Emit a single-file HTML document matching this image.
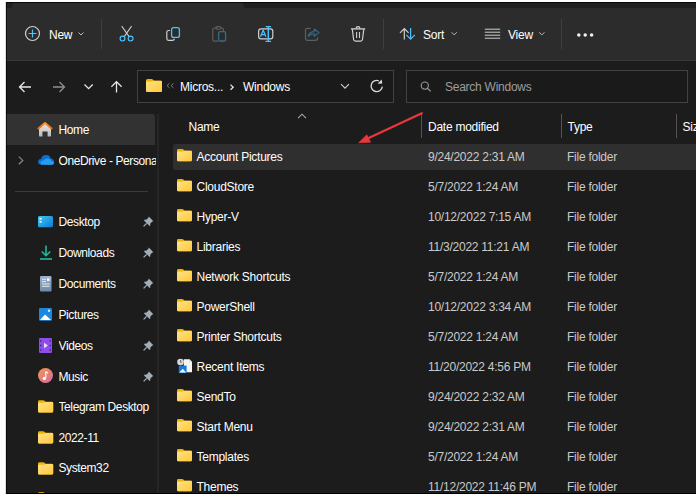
<!DOCTYPE html>
<html><head><meta charset="utf-8">
<style>
*{margin:0;padding:0;box-sizing:border-box}
html,body{width:696px;height:498px;overflow:hidden;background:#fff}
body{position:relative;font-family:"Liberation Sans",sans-serif;font-size:12px;letter-spacing:-0.25px;color:#fff}
.a{position:absolute}
.t{position:absolute;white-space:nowrap;line-height:14px;color:#fff;margin-top:1px}
svg{position:absolute;overflow:visible}
.sep{position:absolute;width:1px;background:#444}
</style></head><body>

<div class="a" style="left:6px;top:2px;width:690px;height:492px;background:#1c1c1c"></div>
<div class="a" style="left:6px;top:2px;width:690px;height:6px;background:#2c2c2c"></div>
<div class="a" style="left:6px;top:2px;width:7px;height:6px;background:#202020;border-bottom-right-radius:4px"></div>
<div class="a" style="left:243px;top:2px;width:460px;height:6px;background:#202020;border-bottom-left-radius:4px"></div>
<div class="a" style="left:6px;top:2px;width:690px;height:1px;background:#0a0a0a"></div>
<div class="a" style="left:6px;top:8px;width:690px;height:53px;background:#2c2c2c;border-bottom:1px solid #383838"></div>
<svg style="left:0;top:0" width="696" height="62">
  <circle cx="32.5" cy="33.5" r="7" fill="none" stroke="#cfcfcf" stroke-width="1.2"/>
  <path d="M32.5 29.5v8M28.5 33.5h8" stroke="#4cc2ff" stroke-width="1.2"/>
  <path d="M78.5 32.5l2.5 2.5 2.5-2.5" fill="none" stroke="#bdbdbd" stroke-width="1"/>
  <!-- scissors -->
  <path d="M122 26.5L129 36.5M131.3 26.5L124.3 36.5" stroke="#cfcfcf" stroke-width="1.2" stroke-linecap="round"/>
  <circle cx="122.5" cy="38.6" r="2.4" fill="none" stroke="#4cc2ff" stroke-width="1.15"/>
  <circle cx="130.6" cy="38.6" r="2.4" fill="none" stroke="#4cc2ff" stroke-width="1.15"/>
  <!-- copy -->
  <path d="M170 30.5H168.5Q166.8 30.5 166.8 32.2V38.5Q166.8 40.3 168.5 40.3H172.5Q174.2 40.3 174.4 38.6" fill="none" stroke="#cfcfcf" stroke-width="1.2"/>
  <rect x="171.6" y="27.6" width="7.8" height="9.8" rx="2" fill="none" stroke="#4cc2ff" stroke-width="1.3"/>
  <!-- paste (disabled) -->
  <path d="M217.5 28H214.3Q212.8 28 212.8 29.5V39.6Q212.8 41.1 214.3 41.1H218M221 28H222Q223.4 28 223.4 29.5V31" fill="none" stroke="#5e5e5e" stroke-width="1.2"/>
  <rect x="215.8" y="26.6" width="5" height="2.6" rx="1.3" fill="none" stroke="#5e5e5e" stroke-width="1.1"/>
  <rect x="218.6" y="31.6" width="7" height="9.4" rx="1.6" fill="none" stroke="#376b8a" stroke-width="1.3"/>
  <!-- rename -->
  <rect x="258.6" y="28.8" width="14.2" height="10" rx="2.4" fill="none" stroke="#cfcfcf" stroke-width="1.2"/>
  <path d="M260.5 36.8L263.2 30.2L265.9 36.8M261.4 34.6H265" fill="none" stroke="#4cc2ff" stroke-width="1.2"/>
  <path d="M268.3 26.6V41.4M265.6 26.6H271M265.6 41.4H271" fill="none" stroke="#4cc2ff" stroke-width="1.4"/>
  <!-- share (disabled) -->
  <path d="M310.5 28.3H307.5Q305.5 28.3 305.5 30.3V38.3Q305.5 40.3 307.5 40.3H315.5Q317.6 40.3 317.6 38.3V37.5" fill="none" stroke="#5e5e5e" stroke-width="1.2"/>
  <path d="M308.3 36.5Q309 31.8 314.2 31.6V29L319 32.6L314.2 36.3V33.7Q310.5 33.7 308.3 36.5Z" fill="none" stroke="#376b8a" stroke-width="1.1" stroke-linejoin="round"/>
  <!-- delete -->
  <path d="M351 28.9H365.2" stroke="#cfcfcf" stroke-width="1.3"/>
  <path d="M355.9 28.6Q356.2 26.6 358 26.6Q359.8 26.6 360.1 28.6" fill="none" stroke="#cfcfcf" stroke-width="1.1"/>
  <path d="M352.3 29.2L353.6 39.5Q353.9 41.1 355.4 41.1H360.7Q362.2 41.1 362.5 39.5L363.8 29.2" fill="none" stroke="#cfcfcf" stroke-width="1.2"/>
  <path d="M356.6 32V38M359.5 32V38" stroke="#cfcfcf" stroke-width="1.1"/>
  <!-- sort -->
  <path d="M404.3 39.5V28.5M400 32.8L404.3 28.5L408.6 32.8" fill="none" stroke="#cfcfcf" stroke-width="1.2"/>
  <path d="M410.6 28V39.2M406.3 34.9L410.6 39.2L414.9 34.9" fill="none" stroke="#4cc2ff" stroke-width="1.2"/>
  <path d="M451.6 32.3l2.6 2.6 2.6-2.6" fill="none" stroke="#bdbdbd" stroke-width="1"/>
  <!-- view -->
  <path d="M484.8 29.2H500.2M484.8 32.2H500.2M484.8 35.2H500.2M484.8 38.2H500.2" stroke="#cfcfcf" stroke-width="1"/>
  <path d="M539.2 32.3l2.6 2.6 2.6-2.6" fill="none" stroke="#bdbdbd" stroke-width="1"/>
  <!-- more -->
  <circle cx="578.8" cy="34.9" r="1.75" fill="#f0f0f0"/>
  <circle cx="585.2" cy="34.9" r="1.75" fill="#f0f0f0"/>
  <circle cx="591.6" cy="34.9" r="1.75" fill="#f0f0f0"/>
</svg>
<div class="t" style="left:49px;top:27px">New</div>
<div class="t" style="left:423px;top:27px">Sort</div>
<div class="t" style="left:508px;top:27px">View</div>
<div class="sep" style="left:101px;top:19px;height:30px;background:#3f3f3f"></div>
<div class="sep" style="left:383px;top:19px;height:30px;background:#3f3f3f"></div>
<div class="sep" style="left:561px;top:19px;height:30px;background:#3f3f3f"></div>
<svg style="left:0;top:62px" width="696" height="50">
  <path d="M19.5 25H31M24.5 20L19.5 25L24.5 30" fill="none" stroke="#e6e6e6" stroke-width="1.3"/>
  <path d="M64.5 25H53M59.5 20L64.5 25L59.5 30" fill="none" stroke="#8f8f8f" stroke-width="1.3"/>
  <path d="M84.5 22.5L88.6 26.6L92.7 22.5" fill="none" stroke="#e6e6e6" stroke-width="1.3"/>
  <path d="M116.5 30.5V19.6M111.4 24.7L116.5 19.6L121.6 24.7" fill="none" stroke="#e6e6e6" stroke-width="1.3"/>
</svg>
<div class="a" style="left:137px;top:70px;width:257px;height:33px;border:1px solid #424242;background:#1a1a1a"></div>
<div class="a" style="left:406px;top:70px;width:282px;height:33px;border:1px solid #424242;background:#1a1a1a"></div>
<svg style="left:145.5px;top:79px" width="16" height="13" viewBox="0 0 16 13">
<defs><linearGradient id="fg145_79" x1="0" y1="0" x2="1" y2="1"><stop offset="0" stop-color="#ffe38a"/><stop offset="1" stop-color="#ffc83a"/></linearGradient></defs>
<path d="M1.5 0H5.6Q6.3 0 6.8 .5L8 1.7H14.5Q16 1.7 16 3.2V11.5Q16 13 14.5 13H1.5Q0 13 0 11.5V1.5Q0 0 1.5 0Z" fill="#f2b300"/>
<path d="M0 3.6Q0 2.6 1 2.6H6.4L7.8 1.8H15Q16 1.8 16 2.8V11.5Q16 13 14.5 13H1.5Q0 13 0 11.5Z" fill="url(#fg145_79)"/>
</svg>
<svg style="left:0;top:62px" width="696" height="50">
  <path d="M169.5 21.3L167 23.6L169.5 25.9M173.5 21.3L171 23.6L173.5 25.9" fill="none" stroke="#7a7a7a" stroke-width="1"/>
  <path d="M230.5 22.6L233.2 25.2L230.5 27.8" fill="none" stroke="#e6e6e6" stroke-width="1.3"/>
  <path d="M341 22.2L345 26.2L349 22.2" fill="none" stroke="#d0d0d0" stroke-width="1.1"/>
  <path d="M382.3 24.6A5.6 5.6 0 1 1 378.8 18.8" fill="none" stroke="#d8d8d8" stroke-width="1.35"/>
  <path d="M377.6 21.7L382.3 21.4L381.6 17.6Z" fill="#e0e0e0"/>
  <circle cx="424.8" cy="23.6" r="3.6" fill="none" stroke="#9a9a9a" stroke-width="1.1"/>
  <path d="M427.4 26.2L430.8 29.4" stroke="#9a9a9a" stroke-width="1.2"/>
</svg>
<div class="t" style="left:180px;top:79px">Micros...</div>
<div class="t" style="left:243px;top:79px">Windows</div>
<div class="t" style="left:445px;top:79px;color:#9d9d9d">Search Windows</div>
<div class="a" style="left:6px;top:114px;width:149px;height:30.5px;background:#323232;border-radius:0 3px 0 0"></div>
<div class="a" style="left:157px;top:114px;width:2px;height:380px;background:#262626"></div>
<div class="a" style="left:15px;top:191px;width:133px;height:1px;background:#3a3a3a"></div>
<svg style="left:37px;top:122.0px" width="16" height="15" viewBox="0 0 16 15">
<defs><linearGradient id="hg" x1="0" y1="0" x2="0" y2="1"><stop offset="0" stop-color="#e8e8e8"/><stop offset="1" stop-color="#b8b8b8"/></linearGradient>
<linearGradient id="rg" x1="0" y1="0" x2="0" y2="1"><stop offset="0" stop-color="#ff9a2a"/><stop offset="1" stop-color="#e86a10"/></linearGradient></defs>
<path d="M2 6.6L8 1.4L14 6.6V13.4Q14 14.6 12.8 14.6H10.6V9.6H5.4V14.6H3.2Q2 14.6 2 13.4Z" fill="url(#hg)"/>
<path d="M1.3 6.4L8 0.9L14.7 6.4" fill="none" stroke="url(#rg)" stroke-width="1.9" stroke-linecap="round" stroke-linejoin="round"/></svg>
<div class="t" style="left:58.5px;top:122.0px;width:97px;overflow:hidden;letter-spacing:-0.4px">Home</div>
<svg style="left:37.8px;top:155.25px" width="16" height="10" viewBox="0 0 16 10">
<path d="M3.6 9.8Q0 9.8 0 6.8Q0 4.2 3 4Q3.8 0 8 0Q11.8 0 12.8 3.4Q16 3.8 16 6.9Q16 9.8 12.8 9.8Z" fill="#0a6fd0"/>
<path d="M4.5 9.8Q2.2 9.8 2.4 7.6Q2.7 5.4 5.6 5.6Q7.2 3.2 10.2 3.6Q12.8 4 13.4 6Q16 6.2 16 8Q16 9.8 13.8 9.8Z" fill="#2a9cee"/></svg>
<div class="t" style="left:58.5px;top:152.75px;width:97px;overflow:hidden;letter-spacing:-0.4px">OneDrive - Persona</div>
<svg style="left:38px;top:215.95px" width="15" height="12" viewBox="0 0 15 12">
<defs><linearGradient id="dg" x1="0" y1="0" x2="1" y2="1"><stop offset="0" stop-color="#3ccaf0"/><stop offset="1" stop-color="#1177d0"/></linearGradient></defs>
<rect x="0" y="0" width="15" height="11.3" rx="1.5" fill="url(#dg)"/>
<rect x="1.6" y="2" width="2" height="1.6" fill="#fff"/><rect x="1.6" y="5" width="2" height="1.6" fill="#fff"/></svg>
<div class="t" style="left:58.5px;top:214.2px;width:97px;overflow:hidden;letter-spacing:-0.4px">Desktop</div>
<svg style="left:142.5px;top:216.2px" width="11" height="11" viewBox="0 0 11 11">
<path d="M5.8 0.6L10.4 5.2L9.3 5.6L7.2 7.8L7.4 9.2L6.6 10L1 4.4L1.8 3.6L3.2 3.8L5.4 1.7Z" fill="#a3adb7"/>
<path d="M3.6 7.4L0.6 10.4" stroke="#a3adb7" stroke-width="1.3"/></svg>
<svg style="left:40px;top:245.2px" width="12" height="15" viewBox="0 0 12 15">
<path d="M6 0.5V10.5M1.8 6.5L6 10.7L10.2 6.5" fill="none" stroke="#21b99a" stroke-width="1.6"/>
<path d="M0 14H12" stroke="#21b99a" stroke-width="1.6"/></svg>
<div class="t" style="left:58.5px;top:245.2px;width:97px;overflow:hidden;letter-spacing:-0.4px">Downloads</div>
<svg style="left:142.5px;top:247.2px" width="11" height="11" viewBox="0 0 11 11">
<path d="M5.8 0.6L10.4 5.2L9.3 5.6L7.2 7.8L7.4 9.2L6.6 10L1 4.4L1.8 3.6L3.2 3.8L5.4 1.7Z" fill="#a3adb7"/>
<path d="M3.6 7.4L0.6 10.4" stroke="#a3adb7" stroke-width="1.3"/></svg>
<svg style="left:40px;top:275.75px" width="12" height="16" viewBox="0 0 12 16">
<defs><linearGradient id="docg" x1="0" y1="0" x2="0" y2="1"><stop offset="0" stop-color="#9fb3cc"/><stop offset="1" stop-color="#6f8aa8"/></linearGradient></defs>
<rect x="0" y="0" width="11.5" height="15.5" rx="1.2" fill="url(#docg)"/>
<path d="M2 3.3H6M2 5.6H6M2 8H9.5M2 10.3H9.5" stroke="#eef2f7" stroke-width="0.9"/><rect x="7" y="2.4" width="2.5" height="2.5" fill="#fff"/></svg>
<div class="t" style="left:58.5px;top:276.0px;width:97px;overflow:hidden;letter-spacing:-0.4px">Documents</div>
<svg style="left:142.5px;top:278.0px" width="11" height="11" viewBox="0 0 11 11">
<path d="M5.8 0.6L10.4 5.2L9.3 5.6L7.2 7.8L7.4 9.2L6.6 10L1 4.4L1.8 3.6L3.2 3.8L5.4 1.7Z" fill="#a3adb7"/>
<path d="M3.6 7.4L0.6 10.4" stroke="#a3adb7" stroke-width="1.3"/></svg>
<svg style="left:39px;top:307.8px" width="13" height="13" viewBox="0 0 13 13">
<rect x="0" y="0" width="13" height="12.8" rx="1.2" fill="#1c88e0"/>
<path d="M1 12L6 6.5L12 12Z" fill="#fff"/><circle cx="10" cy="2.8" r="1.2" fill="#d9efff"/></svg>
<div class="t" style="left:58.5px;top:306.8px;width:97px;overflow:hidden;letter-spacing:-0.4px">Pictures</div>
<svg style="left:142.5px;top:308.8px" width="11" height="11" viewBox="0 0 11 11">
<path d="M5.8 0.6L10.4 5.2L9.3 5.6L7.2 7.8L7.4 9.2L6.6 10L1 4.4L1.8 3.6L3.2 3.8L5.4 1.7Z" fill="#a3adb7"/>
<path d="M3.6 7.4L0.6 10.4" stroke="#a3adb7" stroke-width="1.3"/></svg>
<svg style="left:39px;top:337.7px" width="13" height="15" viewBox="0 0 13 15">
<rect x="0" y="0" width="13" height="15" rx="1.2" fill="#8c4de8"/>
<circle cx="1.8" cy="3" r=".8" fill="#3b1c6e"/><circle cx="1.8" cy="7.5" r=".8" fill="#3b1c6e"/><circle cx="1.8" cy="12" r=".8" fill="#3b1c6e"/>
<circle cx="11.2" cy="3" r=".8" fill="#3b1c6e"/><circle cx="11.2" cy="7.5" r=".8" fill="#3b1c6e"/><circle cx="11.2" cy="12" r=".8" fill="#3b1c6e"/>
<path d="M5 4.8L9 7.5L5 10.2Z" fill="#e8dcff"/></svg>
<div class="t" style="left:58.5px;top:337.7px;width:97px;overflow:hidden;letter-spacing:-0.4px">Videos</div>
<svg style="left:142.5px;top:339.7px" width="11" height="11" viewBox="0 0 11 11">
<path d="M5.8 0.6L10.4 5.2L9.3 5.6L7.2 7.8L7.4 9.2L6.6 10L1 4.4L1.8 3.6L3.2 3.8L5.4 1.7Z" fill="#a3adb7"/>
<path d="M3.6 7.4L0.6 10.4" stroke="#a3adb7" stroke-width="1.3"/></svg>
<svg style="left:38px;top:368.25px" width="15" height="15" viewBox="0 0 15 15">
<defs><linearGradient id="mg" x1="0" y1="0" x2="1" y2="1"><stop offset="0" stop-color="#f2974e"/><stop offset="1" stop-color="#d76aa0"/></linearGradient></defs>
<circle cx="7.5" cy="7.5" r="7.5" fill="url(#mg)"/>
<path d="M7.8 3.5V10.2" stroke="#fff" stroke-width="1.1"/><circle cx="6.3" cy="10.4" r="1.6" fill="#fff"/><path d="M7.8 3.5L10 5.2" stroke="#fff" stroke-width="1.1"/></svg>
<div class="t" style="left:58.5px;top:368.5px;width:97px;overflow:hidden;letter-spacing:-0.4px">Music</div>
<svg style="left:142.5px;top:370.5px" width="11" height="11" viewBox="0 0 11 11">
<path d="M5.8 0.6L10.4 5.2L9.3 5.6L7.2 7.8L7.4 9.2L6.6 10L1 4.4L1.8 3.6L3.2 3.8L5.4 1.7Z" fill="#a3adb7"/>
<path d="M3.6 7.4L0.6 10.4" stroke="#a3adb7" stroke-width="1.3"/></svg>
<svg style="left:38px;top:400.0px" width="15.2" height="12.8" viewBox="0 0 16 13">
<defs><linearGradient id="fg38_400" x1="0" y1="0" x2="1" y2="1"><stop offset="0" stop-color="#ffe38a"/><stop offset="1" stop-color="#ffc83a"/></linearGradient></defs>
<path d="M1.5 0H5.6Q6.3 0 6.8 .5L8 1.7H14.5Q16 1.7 16 3.2V11.5Q16 13 14.5 13H1.5Q0 13 0 11.5V1.5Q0 0 1.5 0Z" fill="#f2b300"/>
<path d="M0 3.6Q0 2.6 1 2.6H6.4L7.8 1.8H15Q16 1.8 16 2.8V11.5Q16 13 14.5 13H1.5Q0 13 0 11.5Z" fill="url(#fg38_400)"/>
</svg>
<div class="t" style="left:58.5px;top:398.75px;width:97px;overflow:hidden;letter-spacing:-0.4px">Telegram Desktop</div>
<svg style="left:38px;top:430.75px" width="15.2" height="12.8" viewBox="0 0 16 13">
<defs><linearGradient id="fg38_430" x1="0" y1="0" x2="1" y2="1"><stop offset="0" stop-color="#ffe38a"/><stop offset="1" stop-color="#ffc83a"/></linearGradient></defs>
<path d="M1.5 0H5.6Q6.3 0 6.8 .5L8 1.7H14.5Q16 1.7 16 3.2V11.5Q16 13 14.5 13H1.5Q0 13 0 11.5V1.5Q0 0 1.5 0Z" fill="#f2b300"/>
<path d="M0 3.6Q0 2.6 1 2.6H6.4L7.8 1.8H15Q16 1.8 16 2.8V11.5Q16 13 14.5 13H1.5Q0 13 0 11.5Z" fill="url(#fg38_430)"/>
</svg>
<div class="t" style="left:58.5px;top:429.5px;width:97px;overflow:hidden;letter-spacing:-0.4px">2022-11</div>
<svg style="left:38px;top:461.5px" width="15.2" height="12.8" viewBox="0 0 16 13">
<defs><linearGradient id="fg38_461" x1="0" y1="0" x2="1" y2="1"><stop offset="0" stop-color="#ffe38a"/><stop offset="1" stop-color="#ffc83a"/></linearGradient></defs>
<path d="M1.5 0H5.6Q6.3 0 6.8 .5L8 1.7H14.5Q16 1.7 16 3.2V11.5Q16 13 14.5 13H1.5Q0 13 0 11.5V1.5Q0 0 1.5 0Z" fill="#f2b300"/>
<path d="M0 3.6Q0 2.6 1 2.6H6.4L7.8 1.8H15Q16 1.8 16 2.8V11.5Q16 13 14.5 13H1.5Q0 13 0 11.5Z" fill="url(#fg38_461)"/>
</svg>
<div class="t" style="left:58.5px;top:460.25px;width:97px;overflow:hidden;letter-spacing:-0.4px">System32</div>
<svg style="left:38px;top:492.25px" width="15.2" height="12.8" viewBox="0 0 16 13">
<defs><linearGradient id="fg38_492" x1="0" y1="0" x2="1" y2="1"><stop offset="0" stop-color="#ffe38a"/><stop offset="1" stop-color="#ffc83a"/></linearGradient></defs>
<path d="M1.5 0H5.6Q6.3 0 6.8 .5L8 1.7H14.5Q16 1.7 16 3.2V11.5Q16 13 14.5 13H1.5Q0 13 0 11.5V1.5Q0 0 1.5 0Z" fill="#f2b300"/>
<path d="M0 3.6Q0 2.6 1 2.6H6.4L7.8 1.8H15Q16 1.8 16 2.8V11.5Q16 13 14.5 13H1.5Q0 13 0 11.5Z" fill="url(#fg38_492)"/>
</svg>
<div class="a" style="left:143px;top:160px;width:14px;height:14px"></div>
<svg style="left:0;top:0" width="160" height="200">
<path d="M18.8 156.6L22.8 160.4L18.8 164.2" fill="none" stroke="#8a8a8a" stroke-width="1.2"/></svg>
<div class="t" style="left:188.5px;top:119px">Name</div>
<div class="t" style="left:428px;top:119px">Date modified</div>
<div class="t" style="left:567.5px;top:119px">Type</div>
<div class="t" style="left:682.5px;top:119px">Size</div>
<div class="sep" style="left:421px;top:114px;height:24px;background:#535353"></div>
<div class="sep" style="left:561px;top:114px;height:24px;background:#535353"></div>
<div class="sep" style="left:676px;top:114px;height:24px;background:#535353"></div>
<svg style="left:0;top:0" width="696" height="130">
<path d="M298 118.2L302 114.2L306 118.2" fill="none" stroke="#a8a8a8" stroke-width="1.1"/></svg>
<div class="a" style="left:173px;top:144px;width:523px;height:26px;background:#2f2f2f;border-radius:2px 0 0 2px"></div>
<svg style="left:177px;top:149.45px" width="15" height="12.4" viewBox="0 0 16 13">
<defs><linearGradient id="fg177_149" x1="0" y1="0" x2="1" y2="1"><stop offset="0" stop-color="#ffe38a"/><stop offset="1" stop-color="#ffc83a"/></linearGradient></defs>
<path d="M1.5 0H5.6Q6.3 0 6.8 .5L8 1.7H14.5Q16 1.7 16 3.2V11.5Q16 13 14.5 13H1.5Q0 13 0 11.5V1.5Q0 0 1.5 0Z" fill="#f2b300"/>
<path d="M0 3.6Q0 2.6 1 2.6H6.4L7.8 1.8H15Q16 1.8 16 2.8V11.5Q16 13 14.5 13H1.5Q0 13 0 11.5Z" fill="url(#fg177_149)"/>
</svg>
<div class="t" style="left:196.5px;top:149.3px">Account Pictures</div>
<div class="t" style="left:428px;top:149.3px;color:#cacaca">9/24/2022 2:31 AM</div>
<div class="t" style="left:567px;top:149.3px;color:#cacaca">File folder</div>
<svg style="left:177px;top:179.38px" width="15" height="12.4" viewBox="0 0 16 13">
<defs><linearGradient id="fg177_179" x1="0" y1="0" x2="1" y2="1"><stop offset="0" stop-color="#ffe38a"/><stop offset="1" stop-color="#ffc83a"/></linearGradient></defs>
<path d="M1.5 0H5.6Q6.3 0 6.8 .5L8 1.7H14.5Q16 1.7 16 3.2V11.5Q16 13 14.5 13H1.5Q0 13 0 11.5V1.5Q0 0 1.5 0Z" fill="#f2b300"/>
<path d="M0 3.6Q0 2.6 1 2.6H6.4L7.8 1.8H15Q16 1.8 16 2.8V11.5Q16 13 14.5 13H1.5Q0 13 0 11.5Z" fill="url(#fg177_179)"/>
</svg>
<div class="t" style="left:196.5px;top:179.23px">CloudStore</div>
<div class="t" style="left:428px;top:179.23px;color:#cacaca">5/7/2022 1:24 AM</div>
<div class="t" style="left:567px;top:179.23px;color:#cacaca">File folder</div>
<svg style="left:177px;top:209.31px" width="15" height="12.4" viewBox="0 0 16 13">
<defs><linearGradient id="fg177_209" x1="0" y1="0" x2="1" y2="1"><stop offset="0" stop-color="#ffe38a"/><stop offset="1" stop-color="#ffc83a"/></linearGradient></defs>
<path d="M1.5 0H5.6Q6.3 0 6.8 .5L8 1.7H14.5Q16 1.7 16 3.2V11.5Q16 13 14.5 13H1.5Q0 13 0 11.5V1.5Q0 0 1.5 0Z" fill="#f2b300"/>
<path d="M0 3.6Q0 2.6 1 2.6H6.4L7.8 1.8H15Q16 1.8 16 2.8V11.5Q16 13 14.5 13H1.5Q0 13 0 11.5Z" fill="url(#fg177_209)"/>
</svg>
<div class="t" style="left:196.5px;top:209.16px">Hyper-V</div>
<div class="t" style="left:428px;top:209.16px;color:#cacaca">10/12/2022 7:15 AM</div>
<div class="t" style="left:567px;top:209.16px;color:#cacaca">File folder</div>
<svg style="left:177px;top:239.24px" width="15" height="12.4" viewBox="0 0 16 13">
<defs><linearGradient id="fg177_239" x1="0" y1="0" x2="1" y2="1"><stop offset="0" stop-color="#ffe38a"/><stop offset="1" stop-color="#ffc83a"/></linearGradient></defs>
<path d="M1.5 0H5.6Q6.3 0 6.8 .5L8 1.7H14.5Q16 1.7 16 3.2V11.5Q16 13 14.5 13H1.5Q0 13 0 11.5V1.5Q0 0 1.5 0Z" fill="#f2b300"/>
<path d="M0 3.6Q0 2.6 1 2.6H6.4L7.8 1.8H15Q16 1.8 16 2.8V11.5Q16 13 14.5 13H1.5Q0 13 0 11.5Z" fill="url(#fg177_239)"/>
</svg>
<div class="t" style="left:196.5px;top:239.09px">Libraries</div>
<div class="t" style="left:428px;top:239.09px;color:#cacaca">11/3/2022 11:21 AM</div>
<div class="t" style="left:567px;top:239.09px;color:#cacaca">File folder</div>
<svg style="left:177px;top:269.17px" width="15" height="12.4" viewBox="0 0 16 13">
<defs><linearGradient id="fg177_269" x1="0" y1="0" x2="1" y2="1"><stop offset="0" stop-color="#ffe38a"/><stop offset="1" stop-color="#ffc83a"/></linearGradient></defs>
<path d="M1.5 0H5.6Q6.3 0 6.8 .5L8 1.7H14.5Q16 1.7 16 3.2V11.5Q16 13 14.5 13H1.5Q0 13 0 11.5V1.5Q0 0 1.5 0Z" fill="#f2b300"/>
<path d="M0 3.6Q0 2.6 1 2.6H6.4L7.8 1.8H15Q16 1.8 16 2.8V11.5Q16 13 14.5 13H1.5Q0 13 0 11.5Z" fill="url(#fg177_269)"/>
</svg>
<div class="t" style="left:196.5px;top:269.02px">Network Shortcuts</div>
<div class="t" style="left:428px;top:269.02px;color:#cacaca">5/7/2022 1:24 AM</div>
<div class="t" style="left:567px;top:269.02px;color:#cacaca">File folder</div>
<svg style="left:177px;top:299.1px" width="15" height="12.4" viewBox="0 0 16 13">
<defs><linearGradient id="fg177_299" x1="0" y1="0" x2="1" y2="1"><stop offset="0" stop-color="#ffe38a"/><stop offset="1" stop-color="#ffc83a"/></linearGradient></defs>
<path d="M1.5 0H5.6Q6.3 0 6.8 .5L8 1.7H14.5Q16 1.7 16 3.2V11.5Q16 13 14.5 13H1.5Q0 13 0 11.5V1.5Q0 0 1.5 0Z" fill="#f2b300"/>
<path d="M0 3.6Q0 2.6 1 2.6H6.4L7.8 1.8H15Q16 1.8 16 2.8V11.5Q16 13 14.5 13H1.5Q0 13 0 11.5Z" fill="url(#fg177_299)"/>
</svg>
<div class="t" style="left:196.5px;top:298.95px">PowerShell</div>
<div class="t" style="left:428px;top:298.95px;color:#cacaca">10/12/2022 3:34 AM</div>
<div class="t" style="left:567px;top:298.95px;color:#cacaca">File folder</div>
<svg style="left:177px;top:329.03px" width="15" height="12.4" viewBox="0 0 16 13">
<defs><linearGradient id="fg177_329" x1="0" y1="0" x2="1" y2="1"><stop offset="0" stop-color="#ffe38a"/><stop offset="1" stop-color="#ffc83a"/></linearGradient></defs>
<path d="M1.5 0H5.6Q6.3 0 6.8 .5L8 1.7H14.5Q16 1.7 16 3.2V11.5Q16 13 14.5 13H1.5Q0 13 0 11.5V1.5Q0 0 1.5 0Z" fill="#f2b300"/>
<path d="M0 3.6Q0 2.6 1 2.6H6.4L7.8 1.8H15Q16 1.8 16 2.8V11.5Q16 13 14.5 13H1.5Q0 13 0 11.5Z" fill="url(#fg177_329)"/>
</svg>
<div class="t" style="left:196.5px;top:328.88px">Printer Shortcuts</div>
<div class="t" style="left:428px;top:328.88px;color:#cacaca">5/7/2022 1:24 AM</div>
<div class="t" style="left:567px;top:328.88px;color:#cacaca">File folder</div>
<svg style="left:177px;top:358.16px" width="16" height="16" viewBox="0 0 16 16">
<circle cx="3.5" cy="4" r="3.3" fill="#d8d8d8"/><path d="M3.5 2V4.2H4.8" fill="none" stroke="#555" stroke-width=".8"/>
<path d="M6.8 1.3H12.5L15 3.8V14.3H6.8Z" fill="#f4f4f4"/><path d="M12.5 1.3V3.8H15" fill="#cfcfcf"/>
<rect x="1.8" y="7.6" width="7.8" height="7.5" fill="#1a78d6"/><path d="M2.4 14.6L5.7 10.8L9 14.6Z" fill="#fff"/></svg>
<div class="t" style="left:196.5px;top:358.81px">Recent Items</div>
<div class="t" style="left:428px;top:358.81px;color:#cacaca">11/20/2022 4:56 PM</div>
<div class="t" style="left:567px;top:358.81px;color:#cacaca">File folder</div>
<svg style="left:177px;top:388.89px" width="15" height="12.4" viewBox="0 0 16 13">
<defs><linearGradient id="fg177_388" x1="0" y1="0" x2="1" y2="1"><stop offset="0" stop-color="#ffe38a"/><stop offset="1" stop-color="#ffc83a"/></linearGradient></defs>
<path d="M1.5 0H5.6Q6.3 0 6.8 .5L8 1.7H14.5Q16 1.7 16 3.2V11.5Q16 13 14.5 13H1.5Q0 13 0 11.5V1.5Q0 0 1.5 0Z" fill="#f2b300"/>
<path d="M0 3.6Q0 2.6 1 2.6H6.4L7.8 1.8H15Q16 1.8 16 2.8V11.5Q16 13 14.5 13H1.5Q0 13 0 11.5Z" fill="url(#fg177_388)"/>
</svg>
<div class="t" style="left:196.5px;top:388.74px">SendTo</div>
<div class="t" style="left:428px;top:388.74px;color:#cacaca">9/24/2022 2:32 AM</div>
<div class="t" style="left:567px;top:388.74px;color:#cacaca">File folder</div>
<svg style="left:177px;top:418.82px" width="15" height="12.4" viewBox="0 0 16 13">
<defs><linearGradient id="fg177_418" x1="0" y1="0" x2="1" y2="1"><stop offset="0" stop-color="#ffe38a"/><stop offset="1" stop-color="#ffc83a"/></linearGradient></defs>
<path d="M1.5 0H5.6Q6.3 0 6.8 .5L8 1.7H14.5Q16 1.7 16 3.2V11.5Q16 13 14.5 13H1.5Q0 13 0 11.5V1.5Q0 0 1.5 0Z" fill="#f2b300"/>
<path d="M0 3.6Q0 2.6 1 2.6H6.4L7.8 1.8H15Q16 1.8 16 2.8V11.5Q16 13 14.5 13H1.5Q0 13 0 11.5Z" fill="url(#fg177_418)"/>
</svg>
<div class="t" style="left:196.5px;top:418.67px">Start Menu</div>
<div class="t" style="left:428px;top:418.67px;color:#cacaca">9/24/2022 2:31 AM</div>
<div class="t" style="left:567px;top:418.67px;color:#cacaca">File folder</div>
<svg style="left:177px;top:448.75px" width="15" height="12.4" viewBox="0 0 16 13">
<defs><linearGradient id="fg177_448" x1="0" y1="0" x2="1" y2="1"><stop offset="0" stop-color="#ffe38a"/><stop offset="1" stop-color="#ffc83a"/></linearGradient></defs>
<path d="M1.5 0H5.6Q6.3 0 6.8 .5L8 1.7H14.5Q16 1.7 16 3.2V11.5Q16 13 14.5 13H1.5Q0 13 0 11.5V1.5Q0 0 1.5 0Z" fill="#f2b300"/>
<path d="M0 3.6Q0 2.6 1 2.6H6.4L7.8 1.8H15Q16 1.8 16 2.8V11.5Q16 13 14.5 13H1.5Q0 13 0 11.5Z" fill="url(#fg177_448)"/>
</svg>
<div class="t" style="left:196.5px;top:448.6px">Templates</div>
<div class="t" style="left:428px;top:448.6px;color:#cacaca">5/7/2022 1:24 AM</div>
<div class="t" style="left:567px;top:448.6px;color:#cacaca">File folder</div>
<svg style="left:177px;top:478.68px" width="15" height="12.4" viewBox="0 0 16 13">
<defs><linearGradient id="fg177_478" x1="0" y1="0" x2="1" y2="1"><stop offset="0" stop-color="#ffe38a"/><stop offset="1" stop-color="#ffc83a"/></linearGradient></defs>
<path d="M1.5 0H5.6Q6.3 0 6.8 .5L8 1.7H14.5Q16 1.7 16 3.2V11.5Q16 13 14.5 13H1.5Q0 13 0 11.5V1.5Q0 0 1.5 0Z" fill="#f2b300"/>
<path d="M0 3.6Q0 2.6 1 2.6H6.4L7.8 1.8H15Q16 1.8 16 2.8V11.5Q16 13 14.5 13H1.5Q0 13 0 11.5Z" fill="url(#fg177_478)"/>
</svg>
<div class="t" style="left:196.5px;top:478.53px">Themes</div>
<div class="t" style="left:428px;top:478.53px;color:#cacaca">11/12/2022 11:46 PM</div>
<div class="t" style="left:567px;top:478.53px;color:#cacaca">File folder</div>
<svg style="left:0;top:0" width="696" height="498">
<path d="M421.8 113.3L366 139.2" stroke="#e8383a" stroke-width="2.3" stroke-linecap="round"/>
<path d="M358.6 142.8L366.8 134.8L370.6 142.2Z" fill="#e8383a" stroke="#e8383a" stroke-width=".6" stroke-linejoin="round"/></svg>
<div class="a" style="left:6px;top:2px;width:1px;height:492px;background:rgba(0,0,0,.6)"></div>
<div class="a" style="left:5px;top:2px;width:1px;height:492px;background:#dcdcdc"></div>
<div class="a" style="left:6px;top:493px;width:690px;height:1px;background:#000"></div>
<div class="a" style="left:0;top:494px;width:696px;height:4px;background:#fff"></div>
</body></html>
